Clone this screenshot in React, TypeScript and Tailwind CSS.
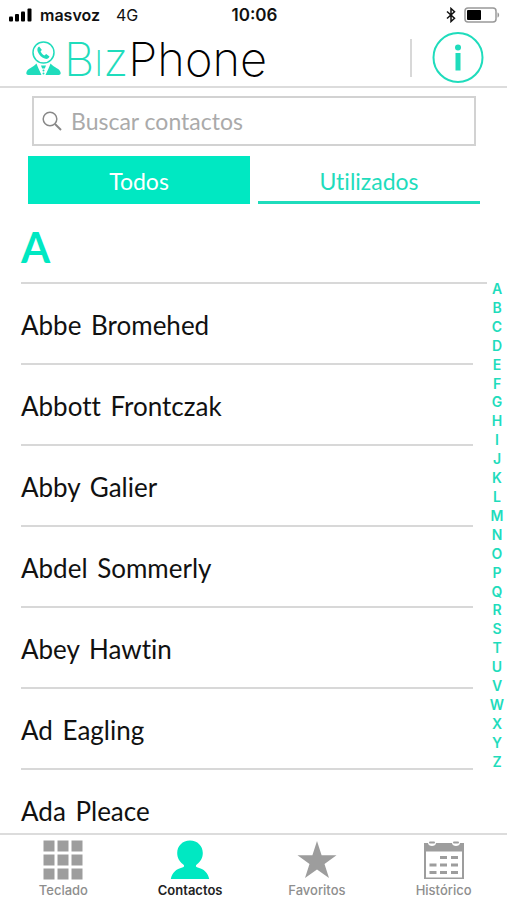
import { useState } from "react";

const contacts = [
  { first: "Abbe", last: "Bromehed" },
  { first: "Abbott", last: "Frontczak" },
  { first: "Abby", last: "Galier" },
  { first: "Abdel", last: "Sommerly" },
  { first: "Abey", last: "Hawtin" },
  { first: "Ad", last: "Eagling" },
  { first: "Ada", last: "Pleace" },
];

const letters = "ABCDEFGHIJKLMNOPQRSTUVWXYZ".split("");

function StatusBar() {
  return (
    <div className="grid h-[30px] shrink-0 grid-cols-3 items-center pr-[7px] pl-[9px] text-base leading-none font-semibold text-[#111]">
      <div className="flex items-center">
        <svg width="24" height="14" viewBox="0 0 24 14" className="mr-[7px]" aria-hidden="true">
          <rect x="0" y="8.5" width="4" height="5" rx="1" />
          <rect x="6" y="6" width="4" height="7.5" rx="1" />
          <rect x="12" y="3.5" width="4" height="10" rx="1" />
          <rect x="18.500" y="0.5" width="4" height="13" rx="1" />
        </svg>
        <span>masvoz</span>
        <span className="ml-4 font-normal">4G</span>
      </div>
      <div className="text-center text-[17px]">10:06</div>
      <div className="flex items-center justify-end gap-2">
        <svg width="10" height="16" viewBox="0 0 10 16" fill="none" stroke="#111" strokeWidth="1.5" aria-hidden="true">
          <path d="M1 4.500 8.500 11.300 5 14.500V1.500L8.500 4.700 1 11.500" />
        </svg>
        <svg width="36" height="16" viewBox="0 0 36 16" aria-hidden="true">
          <rect x="1" y="1" width="31" height="14" rx="3" fill="none" stroke="#999" strokeWidth="1.500" />
          <rect x="3" y="3" width="14" height="10" rx="1" fill="#000" />
          <path d="M33.500 5.500c2.200.6 2.200 4.400 0 5z" fill="#999" />
        </svg>
      </div>
    </div>
  );
}

function Header() {
  return (
    <header className="flex h-[58px] shrink-0 items-center border-b-2 border-[#dcdcdc] pr-[23px] pl-[26px]">
      <svg width="35" height="35" viewBox="0 0 35 35" aria-hidden="true">
        <circle cx="17.500" cy="11.500" r="10.500" fill="none" stroke="#1fdcbc" strokeWidth="1.500" />
        <path
          d="M13.200 5.600c-1.700.9-2.300 2.700-1.500 5 1.300 3.700 4.200 6.500 7.600 7.200 2 .4 3.500-.4 4.200-2.200l-3.300-2.500-1.800 1.300c-1.800-.8-3.200-2.300-3.800-4.200l1.300-1.300z"
          fill="#1fdcbc"
        />
        <path
          d="M10.500 22.500c1 3 3 7 5 11.500H2.500C.8 34 0 33 .4 31.500 1 27.500 6.500 27 10.500 22.500zM24.500 22.500c-1 3-3 7-5 11.500h13c1.700 0 2.500-1 2.100-2.500-.6-4-6.100-4.500-10.100-9z"
          fill="#1fdcbc"
        />
        <path d="M15 24.500h5l-1.200 3h-2.600z" fill="#1fdcbc" />
        <circle cx="17.500" cy="29.500" r="1" fill="#1fdcbc" />
        <circle cx="17.500" cy="32.500" r="1" fill="#1fdcbc" />
      </svg>
      <h1 className="ml-[3px] text-[47px] leading-none font-extralight text-black">
        <span className="text-[#1fdcbc]">
          B<span className="text-[35px]">I</span>z
        </span>
        Phone
      </h1>
      <div className="ml-auto h-[38px] w-[2px] bg-[#d8d8d8]" />
      <button type="button" aria-label="Información" className="ml-5">
        <svg width="52" height="52" viewBox="0 0 52 52" aria-hidden="true">
          <circle cx="26" cy="25.500" r="24.500" fill="none" stroke="#1fdcbc" strokeWidth="2" />
          <circle cx="26" cy="15.500" r="3" fill="#1fdcbc" />
          <rect x="23.500" y="21" width="5" height="17.500" fill="#1fdcbc" />
        </svg>
      </button>
    </header>
  );
}

function KeypadIcon() {
  return (
    <svg width="40" height="40" viewBox="0 0 40 40" fill="#9d9d9d" aria-hidden="true">
      {[0, 14, 28].map((y) =>
        [0, 14, 28].map((x) => <rect key={`${x}-${y}`} x={x + 0.5} y={y + 0.5} width="11" height="11" />),
      )}
    </svg>
  );
}

function PersonIcon() {
  return (
    <svg width="40" height="40" viewBox="0 0 40 40" fill="#00e8c2" aria-hidden="true">
      <path d="M20 .5C27.500.5 32.800 6 32.800 13c0 5-2.300 8.500-5.800 11.200-1.900 1.500-1.300 2.600.7 3.200 6 1.500 10.300 5 11.500 11.600H.8C2 32.400 6.300 28.900 12.300 27.400c2-.6 2.600-1.700.7-3.200C9.500 21.500 7.200 18 7.200 13 7.200 6 12.500.5 20 .5z" />
    </svg>
  );
}

function StarIcon() {
  return (
    <svg width="40" height="40" viewBox="0 0 40 40" fill="#9d9d9d" aria-hidden="true">
      <path d="M20 1 24.600 15.300 39.500 15.300 27.500 24 32 38 20 29.500 8 38 12.500 24 .5 15.300 15.400 15.300z" />
    </svg>
  );
}

function CalendarIcon() {
  return (
    <svg width="40" height="40" viewBox="0 0 40 40" fill="#9d9d9d" aria-hidden="true">
      <path d="M0 3h4c0 4 8 4 8 0h16c0 4 8 4 8 0h4v36H0zM2 11.500V37.500H38V11.500z" fillRule="evenodd" />
      <rect x="5" y="1.500" width="6" height="2" rx="1" />
      <rect x="29" y="1.500" width="6" height="2" rx="1" />
      <path d="M16 16h7v3h-7zM27 16h7v3h-7zM5.500 23.500h7v3h-7zM16 23.500h7v3h-7zM27 23.500h7v3h-7zM5.500 31h7v3h-7zM16 31h7v3h-7zM27 31h7v3h-7z" />
    </svg>
  );
}

const tabs = [
  { label: "Teclado", Icon: KeypadIcon },
  { label: "Contactos", Icon: PersonIcon, active: true },
  { label: "Favoritos", Icon: StarIcon },
  { label: "Histórico", Icon: CalendarIcon },
];

export default function App() {
  const [query, setQuery] = useState("");
  return (
    <div className="flex h-screen flex-col overflow-hidden bg-white font-['Inter',sans-serif]">
      <StatusBar />
      <Header />
      <main className="flex min-h-0 flex-1 flex-col overflow-hidden font-['Lato',sans-serif] [font-variant-ligatures:none]">
        <label className="mt-2 mr-[31px] ml-8 flex h-[50px] shrink-0 items-center border-2 border-[#d2d2d2] pl-2">
          <svg width="20" height="20" viewBox="0 0 20 20" fill="none" stroke="#888" strokeWidth="1.500" aria-hidden="true">
            <circle cx="8" cy="8" r="6.800" />
            <path d="m13 13 6 6" strokeWidth="2" />
          </svg>
          <input
            type="text"
            aria-label="Buscar contactos"
            placeholder="Buscar contactos"
            value={query}
            onChange={(e) => setQuery(e.target.value)}
            className="ml-[9px] min-w-0 flex-1 text-[23px] text-[#333] outline-none placeholder:text-[#aaa]"
          />
        </label>
        <div className="mt-[10px] mr-[27px] ml-7 grid h-12 shrink-0 grid-cols-2 gap-2 text-[23px]">
          <button type="button" className="border-b-3 border-[#00e8c2] bg-[#00e8c2] pt-[6px] text-white">
            Todos
          </button>
          <button type="button" className="border-b-3 border-[#1fdcbc] pt-[6px] text-[#1fdcbc]">
            Utilizados
          </button>
        </div>
        <h2 className="mr-5 ml-[21px] flex h-20 shrink-0 items-center border-b-2 border-[#d8d8d8] pt-2 text-[42px] leading-none font-bold text-[#00e8c2]">
          A
        </h2>
        <div className="flex min-h-0 flex-1">
          <ul className="mr-[14px] ml-[21px] flex-1">
            {contacts.map(({ first, last }) => (
              <li
                key={`${first}-${last}`}
                className="flex h-[81px] items-center border-b-2 border-[#d8d8d8] pt-[2px] text-[26px] leading-8 text-[#111]"
              >
                <p>
                  {first} <span className="ml-[3px]">{last}</span>
                </p>
              </li>
            ))}
          </ul>
          <nav
            aria-label="Índice"
            className="-mt-1 flex h-[491px] w-5 flex-col items-center justify-between font-['Inter',sans-serif] text-sm leading-[18px] font-semibold text-[#1fdcbc]"
          >
            {letters.map((letter) => (
              <a key={letter} href={`#${letter}`}>
                {letter}
              </a>
            ))}
          </nav>
        </div>
      </main>
      <nav className="grid h-[67px] shrink-0 grid-cols-4 border-t-2 border-[#dcdcdc] bg-white">
        {tabs.map(({ label, Icon, active }) => (
          <button
            key={label}
            type="button"
            className={`flex flex-col items-center gap-px pt-[5px] text-[13px] leading-[18px] ${active ? "font-semibold text-[#222]" : "font-medium text-[#8e8e8e]"}`}
          >
            <Icon />
            <span>{label}</span>
          </button>
        ))}
      </nav>
    </div>
  );
}
